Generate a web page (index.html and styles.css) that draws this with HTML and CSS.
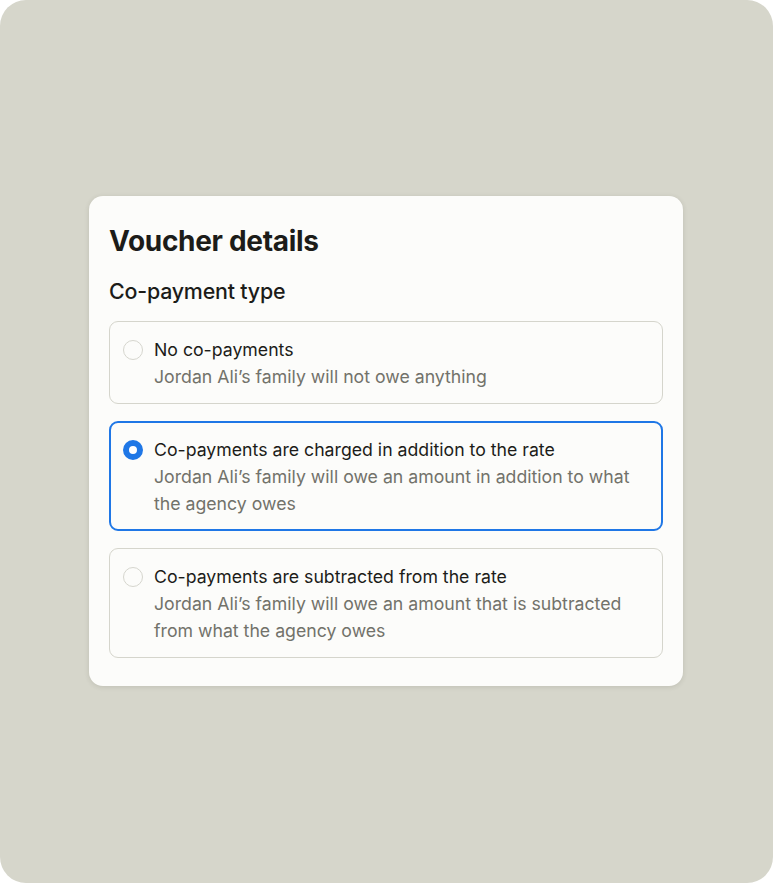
FILE: index.html
```html
<!DOCTYPE html>
<html>
<head>
<meta charset="utf-8">
<link rel="stylesheet" href="styles.css">
</head>
<body>
<div class="stage">
  <div class="card">
    <h1 class="title">Voucher details</h1>
    <h2 class="subtitle">Co-payment type</h2>
    <div class="options">
      <label class="option">
        <span class="radio"></span>
        <span class="text">
          <span class="opt-title">No co-payments</span>
          <span class="opt-desc">Jordan Ali’s family will not owe anything</span>
        </span>
      </label>
      <label class="option selected">
        <span class="radio"></span>
        <span class="text">
          <span class="opt-title">Co-payments are charged in addition to the rate</span>
          <span class="opt-desc">Jordan Ali’s family will owe an amount in addition to what the agency owes</span>
        </span>
      </label>
      <label class="option">
        <span class="radio"></span>
        <span class="text">
          <span class="opt-title">Co-payments are subtracted from the rate</span>
          <span class="opt-desc">Jordan Ali’s family will owe an amount that is subtracted from what the agency owes</span>
        </span>
      </label>
    </div>
  </div>
</div>
</body>
</html>
```

FILE: styles.css
```css
html, body {
  margin: 0;
  padding: 0;
  background: #ffffff;
}
body {
  font-family: "Inter", "Liberation Sans", sans-serif;
  color: #1c1c19;
}
.stage {
  width: 773px;
  height: 883px;
  background: #d6d6cb;
  border-radius: 26px;
  display: flex;
  align-items: flex-start;
  justify-content: flex-start;
  box-sizing: border-box;
  padding: 196px 0 0 89px;
}
.card {
  width: 594px;
  box-sizing: border-box;
  background: #fcfcfa;
  border-radius: 14px;
  padding: 29px 20px 28px;
  box-shadow: 0 1px 5px rgba(60, 60, 40, 0.14);
}
.title {
  margin: 0;
  font-size: 28px;
  line-height: 32px;
  font-weight: 700;
  letter-spacing: -0.3px;
}
.subtitle {
  margin: 21px 0 0;
  font-size: 21.4px;
  line-height: 26px;
  font-weight: 500;
  letter-spacing: -0.2px;
}
.options {
  margin-top: 17px;
  display: flex;
  flex-direction: column;
  gap: 17px;
}
.option {
  display: flex;
  align-items: flex-start;
  gap: 11px;
  border: 1px solid #d5d5cc;
  border-radius: 9px;
  padding: 14px 16px 13px 13px;
  background: #fcfcfa;
}
.option.selected {
  border: 2px solid #1f77e6;
  padding: 13px 15px 12px 12px;
}
.radio {
  flex: none;
  width: 20px;
  height: 20px;
  margin-top: 4px;
  box-sizing: border-box;
  border-radius: 50%;
  border: 1.5px solid #d6d6ce;
  background: #fcfcfa;
}
.selected .radio {
  border: 6px solid #1f77e6;
  background: #ffffff;
}
.text {
  display: flex;
  flex-direction: column;
}
.opt-title {
  font-size: 17.7px;
  line-height: 27px;
  color: #1c1c19;
}
.opt-desc {
  font-size: 17.7px;
  line-height: 27px;
  color: #72726a;
}
```
